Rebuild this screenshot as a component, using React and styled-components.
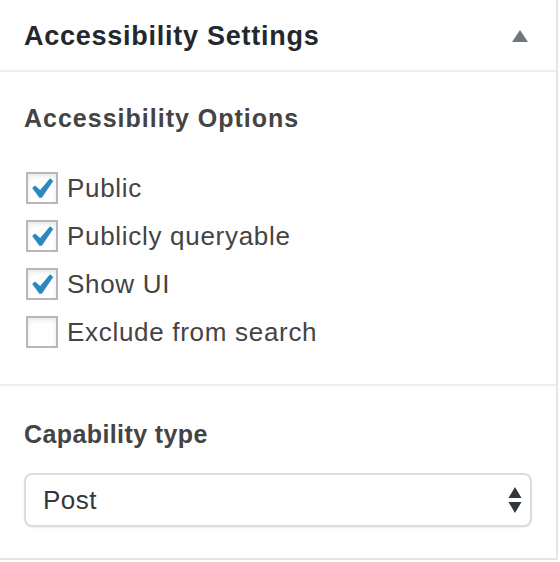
import React from 'react'
import styled, { createGlobalStyle } from 'styled-components'

const GlobalStyle = createGlobalStyle`
  html, body {
    margin: 0;
    padding: 0;
    background: #fff;
  }
  body {
    font-family: "Liberation Sans", Arial, sans-serif;
    color: #444;
  }
`

const Panel = styled.div`
  width: 556px;
  height: 558px;
  background: #fff;
  border-right: 2px solid #e5e5e5;
  border-bottom: 2px solid #e5e5e5;
  display: flex;
  flex-direction: column;
`

const Header = styled.div`
  display: flex;
  align-items: center;
  justify-content: space-between;
  padding: 20px 28px 18px 24px;
  border-bottom: 2px solid #eee;
`

const Title = styled.h2`
  margin: 0;
  font-size: 27px;
  line-height: 32px;
  font-weight: 700;
  letter-spacing: 0.75px;
  color: #23282d;
`

const Section = styled.div`
  padding: ${p => p.$top}px 24px ${p => p.$bottom}px;
  border-bottom: ${p => (p.$divider ? '2px solid #eee' : 'none')};
`

const SectionTitle = styled.h3`
  margin: 0 0 ${p => p.$gap}px;
  font-size: 25px;
  line-height: 30px;
  font-weight: 700;
  letter-spacing: ${p => p.$spacing}px;
  color: #444;
`

const OptionList = styled.div`
  display: flex;
  flex-direction: column;
  gap: 16px;
  padding-left: 2px;
`

const Option = styled.label`
  display: flex;
  align-items: center;
  gap: 9px;
  font-size: 26px;
  line-height: 32px;
  letter-spacing: 0.7px;
  color: #444;
  cursor: pointer;
`

const Box = styled.span`
  box-sizing: border-box;
  width: 32px;
  height: 32px;
  border: 2px solid #b4b9be;
  background: #fff;
  box-shadow: inset 0 2px 4px rgba(0, 0, 0, 0.1);
  display: flex;
  align-items: center;
  justify-content: center;
  flex-shrink: 0;
`

const SelectWrap = styled.div`
  position: relative;
`

const Select = styled.select`
  box-sizing: border-box;
  width: 508px;
  height: 54px;
  padding: 0 40px 0 17px;
  border: 2px solid #ddd;
  border-radius: 8px;
  box-shadow: 0 1px 2px rgba(0, 0, 0, 0.07);
  background: #fff;
  font-family: "Liberation Sans", Arial, sans-serif;
  font-size: 26px;
  letter-spacing: 0.5px;
  color: #32373c;
  appearance: none;
  -webkit-appearance: none;
  outline: none;
`

const Arrows = styled.svg`
  position: absolute;
  right: 10px;
  top: 14px;
  pointer-events: none;
`

function Check() {
  return (
    <svg width="30" height="30" viewBox="0 0 32 32" style={{ margin: -2 }}>
      <polygon points="5.5,16 8.6,13.2 14,18.2 24.6,5.6 28,8.4 15.8,26.4 13.2,26.4" fill="#2a88be" />
    </svg>
  )
}

const options = [
  { label: 'Public', checked: true },
  { label: 'Publicly queryable', checked: true },
  { label: 'Show UI', checked: true },
  { label: 'Exclude from search', checked: false },
]

export default function App() {
  return (
    <>
      <GlobalStyle />
      <Panel>
        <Header>
          <Title>Accessibility Settings</Title>
          <svg width="16" height="12" viewBox="0 0 16 12">
            <polygon points="8,0 16,12 0,12" fill="#72777c" />
          </svg>
        </Header>
        <Section $top={31} $bottom={36} $divider>
          <SectionTitle $gap={39} $spacing={1}>Accessibility Options</SectionTitle>
          <OptionList>
            {options.map(o => (
              <Option key={o.label}>
                <Box>{o.checked && <Check />}</Box>
                {o.label}
              </Option>
            ))}
          </OptionList>
        </Section>
        <Section $top={33} $bottom={0}>
          <SectionTitle $gap={24} $spacing={0.4}>Capability type</SectionTitle>
          <SelectWrap>
            <Select defaultValue="post">
              <option value="post">Post</option>
              <option value="page">Page</option>
            </Select>
            <Arrows width="14" height="27" viewBox="0 0 14 27">
              <polygon points="7,0 13.5,11 0.5,11" fill="#32373c" />
              <polygon points="0.5,15 13.5,15 7,26" fill="#32373c" />
            </Arrows>
          </SelectWrap>
        </Section>
      </Panel>
    </>
  )
}
